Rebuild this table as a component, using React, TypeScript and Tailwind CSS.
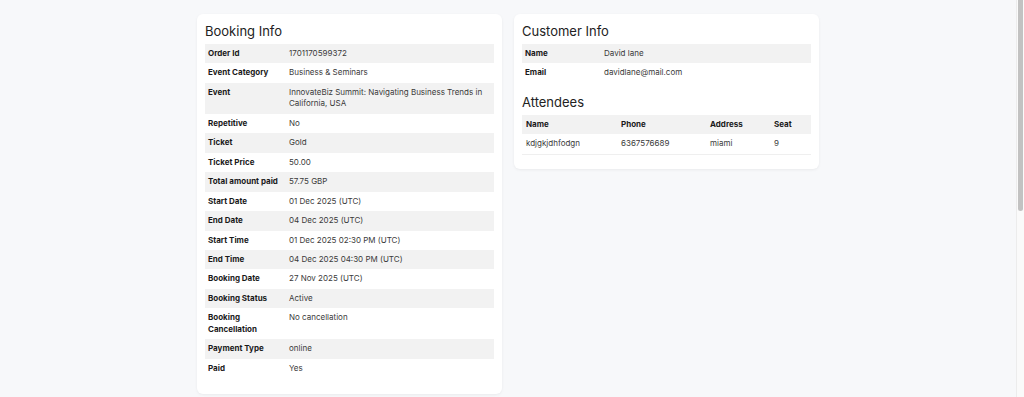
const booking: [string, string][] = [
  ['Order Id', '1701170599372'],
  ['Event Category', 'Business & Seminars'],
  ['Event', 'InnovateBiz Summit: Navigating Business Trends in California, USA'],
  ['Repetitive', 'No'],
  ['Ticket', 'Gold'],
  ['Ticket Price', '50.00'],
  ['Total amount paid', '57.75 GBP'],
  ['Start Date', '01 Dec 2025 (UTC)'],
  ['End Date', '04 Dec 2025 (UTC)'],
  ['Start Time', '01 Dec 2025 02:30 PM (UTC)'],
  ['End Time', '04 Dec 2025 04:30 PM (UTC)'],
  ['Booking Date', '27 Nov 2025 (UTC)'],
  ['Booking Status', 'Active'],
  ['Booking Cancellation', 'No cancellation'],
  ['Payment Type', 'online'],
  ['Paid', 'Yes'],
]

const customer: [string, string][] = [
  ['Name', 'David lane'],
  ['Email', 'davidlane@mail.com'],
]

function InfoTable({ rows, labelWidth }: { rows: [string, string][]; labelWidth: string }) {
  return (
    <table className="w-full border-collapse text-[8px] leading-[11.45px] text-[#212529]">
      <tbody>
        {rows.map(([label, value], i) => (
          <tr key={label} className={i % 2 === 0 ? 'bg-[#f2f2f2]' : 'bg-white'}>
            <th className={`${labelWidth} py-1 pl-[3px] pr-1 text-left align-top font-bold text-[#1a1a1a]`}>
              {label}
            </th>
            <td className="py-1 px-1 align-top text-[#3a3a3a]">{value}</td>
          </tr>
        ))}
      </tbody>
    </table>
  )
}

export default function App() {
  return (
    <div
      className="relative min-h-screen bg-[#f7f8fa] pr-[8px]"
      style={{ fontFamily: 'Inter, "Liberation Sans", sans-serif' }}
    >
      <div className="mx-auto flex w-[622px] items-start gap-[12px] pt-[14px]">
        <section className="w-[305px] rounded-[6px] bg-white px-2 pt-[9px] pb-[16px] shadow-[0_1px_3px_rgba(0,0,0,0.06)]">
          <h2 className="mb-[5px] text-[13px] leading-[16px] text-[#222]">Booking Info</h2>
          <InfoTable rows={booking} labelWidth="w-[80px]" />
        </section>

        <section className="w-[305px] rounded-[6px] bg-white px-2 pt-[9px] pb-[14px] shadow-[0_1px_3px_rgba(0,0,0,0.06)]">
          <h2 className="mb-[5px] text-[13px] leading-[16px] text-[#222]">Customer Info</h2>
          <InfoTable rows={customer} labelWidth="w-[78px]" />

          <h2 className="mt-[11px] mb-[5px] text-[13px] leading-[16px] text-[#222]">Attendees</h2>
          <table className="w-full border-collapse text-[8px] leading-[11.45px] text-[#3a3a3a]">
            <thead>
              <tr className="bg-[#f2f2f2] text-left text-[#1a1a1a]">
                <th className="w-[95px] py-1 pl-[4px] font-bold">Name</th>
                <th className="w-[89px] py-1 pl-[4px] font-bold">Phone</th>
                <th className="w-[64px] py-1 pl-[4px] font-bold">Address</th>
                <th className="py-1 pl-[4px] font-bold">Seat</th>
              </tr>
            </thead>
            <tbody>
              <tr className="border-b border-[#efefef]">
                <td className="py-1 pl-[4px]">kdjgkjdhfodgn</td>
                <td className="py-1 pl-[4px]">6367576689</td>
                <td className="py-1 pl-[4px]">miami</td>
                <td className="py-1 pl-[4px]">9</td>
              </tr>
            </tbody>
          </table>
        </section>
      </div>

      <div className="fixed top-0 right-0 h-screen w-[8px] border-l border-[#ececec] bg-[#fafafa]">
        <div className="ml-[1px] h-[211px] w-[5px] rounded-b-[3px] bg-[#c2c2c2]" />
      </div>
    </div>
  )
}
